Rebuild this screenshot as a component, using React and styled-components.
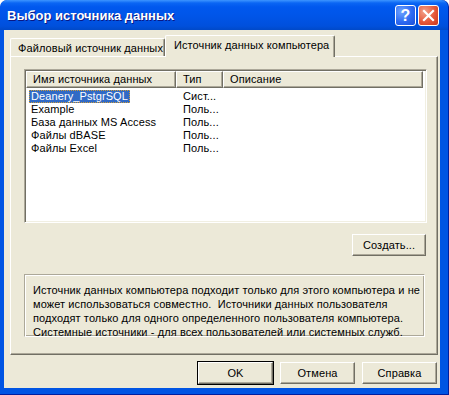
import React from "react";
import styled, { createGlobalStyle } from "styled-components";

const GlobalStyle = createGlobalStyle`
  html, body {
    margin: 0;
    padding: 0;
    background: #ffffff;
  }
  body {
    font-family: "Liberation Sans", Arial, sans-serif;
    font-size: 11px;
    letter-spacing: 0.1px;
  }
`;

const rows = [
  { name: "Deanery_PstgrSQL", type: "Сист...", selected: true },
  { name: "Example", type: "Поль..." },
  { name: "База данных MS Access", type: "Поль..." },
  { name: "Файлы dBASE", type: "Поль..." },
  { name: "Файлы Excel", type: "Поль..." },
];

const App = () => {
  return (
    <>
      <GlobalStyle />
      <Window>
        <TitleBar>
          <Title>Выбор источника данных</Title>
          <CaptionButtons>
            <HelpButton>?</HelpButton>
            <CloseButton>
              <svg width="13" height="13" viewBox="0 0 13 13">
                <path
                  d="M2 2 L11 11 M11 2 L2 11"
                  stroke="#fff"
                  strokeWidth="2.2"
                  strokeLinecap="square"
                />
              </svg>
            </CloseButton>
          </CaptionButtons>
        </TitleBar>

        <Client>
          <TabStrip>
            <Tab>Файловый источник данных</Tab>
            <Tab $active>Источник данных компьютера</Tab>
          </TabStrip>

          <Panel>
            <ListView>
              <Header>
                <HeaderCell $width={150}>Имя источника данных</HeaderCell>
                <HeaderCell $width={47}>Тип</HeaderCell>
                <HeaderCell $width={200}>Описание</HeaderCell>
              </Header>
              <Rows>
                {rows.map((r) => (
                  <Row key={r.name}>
                    <NameCell>
                      <Label $selected={r.selected}>{r.name}</Label>
                    </NameCell>
                    <TypeCell>{r.type}</TypeCell>
                  </Row>
                ))}
              </Rows>
            </ListView>

            <CreateRow>
              <Button $width={74}>
                Соз<u>д</u>ать...
              </Button>
            </CreateRow>

            <InfoBox>
              Источник данных компьютера подходит только для этого компьютера и не
              <br />
              может использоваться совместно.&nbsp; Источники данных пользователя
              <br />
              подходят только для одного определенного пользователя компьютера.
              <br />
              Системные источники - для всех пользователей или системных служб.
            </InfoBox>
          </Panel>

          <ButtonRow>
            <Button $default>OK</Button>
            <Button>Отмена</Button>
            <Button>Справка</Button>
          </ButtonRow>
        </Client>
      </Window>
    </>
  );
};

export default App;

const Window = styled.div`
  width: 449px;
  height: 395px;
  box-sizing: border-box;
  display: flex;
  flex-direction: column;
  background: #0054e3;
  border-radius: 7px 7px 0 0;
  padding: 0 8px 6px 4px;
  border-right: 1px solid #001ea0;
  border-bottom: 1px solid #001ea0;
  overflow: hidden;
`;

const TitleBar = styled.div`
  height: 30px;
  margin: 0 -8px 0 -4px;
  padding: 0 9px 0 7px;
  display: flex;
  align-items: center;
  justify-content: space-between;
  background: linear-gradient(
    to bottom,
    #3d95ff 0px,
    #0a66f4 3px,
    #0058ee 7px,
    #0055e8 16px,
    #0050dc 26px,
    #0049c8 30px
  );
  border-radius: 7px 7px 0 0;
`;

const Title = styled.div`
  color: #fff;
  font-family: "Liberation Sans", Arial, sans-serif;
  font-weight: bold;
  font-size: 13px;
  letter-spacing: 0;
  text-shadow: 1px 1px 0 #0a1883;
  padding-top: 1px;
`;

const CaptionButtons = styled.div`
  display: flex;
  gap: 2px;
  padding-top: 1px;
`;

const CaptionButton = styled.div`
  width: 21px;
  height: 21px;
  box-sizing: border-box;
  border: 1px solid #fff;
  border-radius: 3px;
  display: flex;
  align-items: center;
  justify-content: center;
`;

const HelpButton = styled(CaptionButton)`
  background: radial-gradient(circle at 30% 30%, #6fa4ff 0%, #2d6af2 55%, #1b4fd8 100%);
  color: #fff;
  font-weight: bold;
  font-size: 16px;
  font-family: "Liberation Sans", Arial, sans-serif;
`;

const CloseButton = styled(CaptionButton)`
  background: radial-gradient(circle at 30% 30%, #f3a18a 0%, #e5583a 55%, #c9361c 100%);
`;

const Client = styled.div`
  flex: 1;
  background: #ece9d8;
  padding: 5px 3px 0 6px;
  display: flex;
  flex-direction: column;
`;

const TabStrip = styled.div`
  height: 21px;
  display: flex;
  align-items: flex-end;
  position: relative;
  z-index: 1;
`;

const Tab = styled.div`
  box-sizing: border-box;
  height: ${(p) => (p.$active ? "22px" : "18px")};
  margin-bottom: ${(p) => (p.$active ? "-1px" : "0")};
  padding: ${(p) => (p.$active ? "0 5px 0 8px" : "0 1px 0 7px")};
  padding-top: 3px;
  background: #ece9d8;
  border-top: 1px solid #fff;
  border-left: 1px solid #fff;
  border-right: 1px solid #716f64;
  border-radius: 2px 2px 0 0;
  box-shadow: inset -1px 0 0 #aca899;
  display: flex;
  align-items: flex-start;
  white-space: nowrap;
  color: #000;
`;

const Panel = styled.div`
  width: 428px;
  height: 299px;
  box-sizing: border-box;
  border-top: 1px solid #fff;
  border-left: 1px solid #fff;
  border-right: 1px solid #716f64;
  border-bottom: 1px solid #716f64;
  box-shadow: inset -1px -1px 0 #aca899;
  padding: 12px 10px 0 13px;
  display: flex;
  flex-direction: column;
`;

const ListView = styled.div`
  width: 403px;
  height: 154px;
  box-sizing: border-box;
  background: #fff;
  border-top: 1px solid #aca899;
  border-left: 1px solid #aca899;
  border-right: 1px solid #fff;
  border-bottom: 1px solid #fff;
  box-shadow: inset 1px 1px 0 #716f64, inset -1px -1px 0 #f1efe2;
  padding: 1px;
  display: flex;
  flex-direction: column;
`;

const Header = styled.div`
  display: flex;
  height: 17px;
  flex: none;
`;

const HeaderCell = styled.div`
  width: ${(p) => p.$width}px;
  box-sizing: border-box;
  background: #ece9d8;
  border-top: 1px solid #fff;
  border-left: 1px solid #fff;
  border-right: 1px solid #716f64;
  border-bottom: 1px solid #716f64;
  box-shadow: inset -1px -1px 0 #aca899;
  padding: 1px 0 0 6px;
  line-height: 13px;
  white-space: nowrap;
`;

const Rows = styled.div`
  padding-top: 2px;
  display: flex;
  flex-direction: column;
`;

const Row = styled.div`
  display: flex;
  height: 13px;
  line-height: 13px;
`;

const NameCell = styled.div`
  width: 150px;
  padding-left: 3px;
  box-sizing: border-box;
  display: flex;
`;

const Label = styled.span`
  padding: 0 2px;
  background: ${(p) => (p.$selected ? "#316ac5" : "transparent")};
  color: ${(p) => (p.$selected ? "#fff" : "#000")};
  outline: ${(p) => (p.$selected ? "1px dotted #ce9c3a" : "none")};
  outline-offset: -1px;
  white-space: nowrap;
`;

const TypeCell = styled.div`
  padding-left: 7px;
  white-space: nowrap;
`;

const CreateRow = styled.div`
  display: flex;
  justify-content: flex-end;
  margin-top: 11px;
  padding-right: 1px;
`;

const Button = styled.div`
  width: ${(p) => p.$width || 75}px;
  height: 22px;
  box-sizing: border-box;
  background: #ece9d8;
  border-top: 1px solid #fff;
  border-left: 1px solid #fff;
  border-right: 1px solid #716f64;
  border-bottom: 1px solid #716f64;
  box-shadow: ${(p) =>
    p.$default
      ? "0 0 0 1px #000, inset -1px -1px 0 #aca899"
      : "inset -1px -1px 0 #aca899"};
  display: flex;
  align-items: center;
  justify-content: center;
  color: #000;
  white-space: nowrap;

  u {
    text-decoration: underline;
  }
`;

const InfoBox = styled.div`
  margin-top: 18px;
  width: 401px;
  height: 63px;
  box-sizing: border-box;
  border-top: 1px solid #aca899;
  border-left: 1px solid #aca899;
  border-right: 1px solid #fff;
  border-bottom: 1px solid #fff;
  box-shadow: inset 1px 1px 0 #fff, inset -1px -1px 0 #aca899;
  padding: 8px 0 0 8px;
  line-height: 14px;
  white-space: nowrap;
`;

const ButtonRow = styled.div`
  display: flex;
  justify-content: flex-end;
  gap: 7px;
  margin-top: 7px;
`;
